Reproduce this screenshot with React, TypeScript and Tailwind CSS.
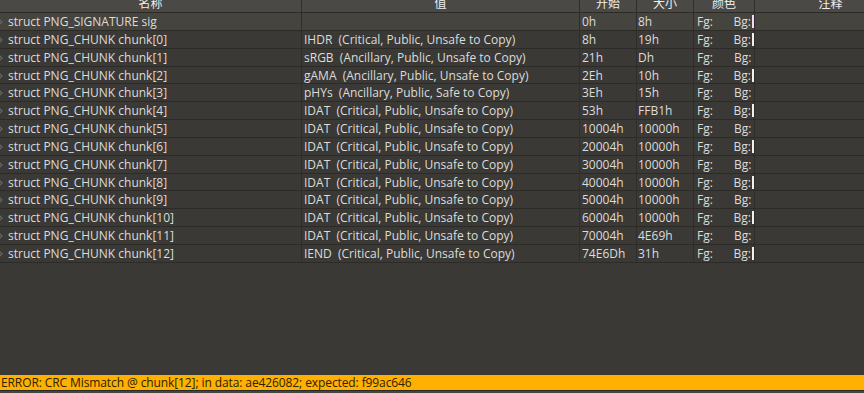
const rows = [
  { name: 'struct PNG_SIGNATURE sig', value: '', start: '0h', size: '8h', swatch: 'bg-[#f4d8f4]' },
  { name: 'struct PNG_CHUNK chunk[0]', value: 'IHDR  (Critical, Public, Unsafe to Copy)', start: '8h', size: '19h', swatch: 'bg-[#f0f0f0]' },
  { name: 'struct PNG_CHUNK chunk[1]', value: 'sRGB  (Ancillary, Public, Unsafe to Copy)', start: '21h', size: 'Dh' },
  { name: 'struct PNG_CHUNK chunk[2]', value: 'gAMA  (Ancillary, Public, Unsafe to Copy)', start: '2Eh', size: '10h', swatch: 'bg-[#f0f0f0]' },
  { name: 'struct PNG_CHUNK chunk[3]', value: 'pHYs  (Ancillary, Public, Safe to Copy)', start: '3Eh', size: '15h' },
  { name: 'struct PNG_CHUNK chunk[4]', value: 'IDAT  (Critical, Public, Unsafe to Copy)', start: '53h', size: 'FFB1h', swatch: 'bg-[#f0f0f0]' },
  { name: 'struct PNG_CHUNK chunk[5]', value: 'IDAT  (Critical, Public, Unsafe to Copy)', start: '10004h', size: '10000h' },
  { name: 'struct PNG_CHUNK chunk[6]', value: 'IDAT  (Critical, Public, Unsafe to Copy)', start: '20004h', size: '10000h', swatch: 'bg-[#f0f0f0]' },
  { name: 'struct PNG_CHUNK chunk[7]', value: 'IDAT  (Critical, Public, Unsafe to Copy)', start: '30004h', size: '10000h' },
  { name: 'struct PNG_CHUNK chunk[8]', value: 'IDAT  (Critical, Public, Unsafe to Copy)', start: '40004h', size: '10000h', swatch: 'bg-[#f0f0f0]' },
  { name: 'struct PNG_CHUNK chunk[9]', value: 'IDAT  (Critical, Public, Unsafe to Copy)', start: '50004h', size: '10000h' },
  { name: 'struct PNG_CHUNK chunk[10]', value: 'IDAT  (Critical, Public, Unsafe to Copy)', start: '60004h', size: '10000h', swatch: 'bg-[#f0f0f0]' },
  { name: 'struct PNG_CHUNK chunk[11]', value: 'IDAT  (Critical, Public, Unsafe to Copy)', start: '70004h', size: '4E69h' },
  { name: 'struct PNG_CHUNK chunk[12]', value: 'IEND  (Critical, Public, Unsafe to Copy)', start: '74E6Dh', size: '31h', swatch: 'bg-[#f0f0f0]' },
]

// column widths: name | value | start | size | color | comment
const cols = 'grid grid-cols-[302px_278px_57px_57px_61px_1fr]'

function Chevron() {
  return (
    <svg width="6" height="8" viewBox="0 0 6 8" className="absolute left-[-2px] top-[5px]" aria-hidden>
      <path d="M1 1 L4 4 L1 7" fill="none" stroke="#6b6a66" strokeWidth="1.2" />
    </svg>
  )
}

export default function App() {
  return (
    <div
      className="flex h-[393px] w-[864px] flex-col overflow-hidden bg-[#3a3935] text-[12px] text-[#dcdcdc]"
      style={{ fontFamily: '"Open Sans", "Noto Sans CJK SC", sans-serif' }}
    >
      {/* header, scrolled so its top is cut off */}
      <div className={`${cols} h-[13px] shrink-0 overflow-hidden border-b border-[#2c2b28] bg-[#4a4945] text-[#eeeeee]`}>
        {['名称', '值', '开始', '大小', '颜色'].map((h) => (
          <div key={h} className="flex items-end justify-center overflow-hidden border-r border-[#2f2e2b] leading-[16px]">
            <span className="mb-[0px]">{h}</span>
          </div>
        ))}
        <div className="flex items-end justify-center overflow-hidden pl-[42px] leading-[16px]">
          <span className="mb-[0px]">注释</span>
        </div>
      </div>

      <div className="flex flex-col">
        {rows.map((r, i) => (
          <div
            key={r.name}
            className={`${cols} h-[17.85px] border-b border-[#2c2b28] leading-[17px] ${i === 0 ? 'bg-[#45443f]' : ''}`}
          >
            <div className="relative border-r border-[#2f2e2b] pl-[8px] whitespace-nowrap">
              <Chevron />
              {r.name}
            </div>
            <div className="border-r border-[#2f2e2b] pl-[2px] whitespace-pre">{r.value}</div>
            <div className="border-r border-[#2f2e2b] pl-[2px]">{r.start}</div>
            <div className="border-r border-[#2f2e2b] pl-[1px]">{r.size}</div>
            <div className="flex border-r border-[#2f2e2b] pl-[3px]">
              <span className="w-[37px]">Fg:</span>
              <span>Bg:</span>
              {r.swatch && <span className={`ml-[1px] mt-[2px] h-[13px] w-[2px] ${r.swatch}`} />}
            </div>
            <div />
          </div>
        ))}
      </div>

      <div className="flex-1" />

      <div className="h-[15px] shrink-0 bg-[#ffb000] pl-[1px] text-[12px] tracking-[-0.1px] leading-[15px] text-[#2a2200]">
        ERROR: CRC Mismatch @ chunk[12]; in data: ae426082; expected: f99ac646
      </div>
      <div className="h-[3px] shrink-0 border-t border-[#2a2926] bg-[#46453f]" />
    </div>
  )
}
